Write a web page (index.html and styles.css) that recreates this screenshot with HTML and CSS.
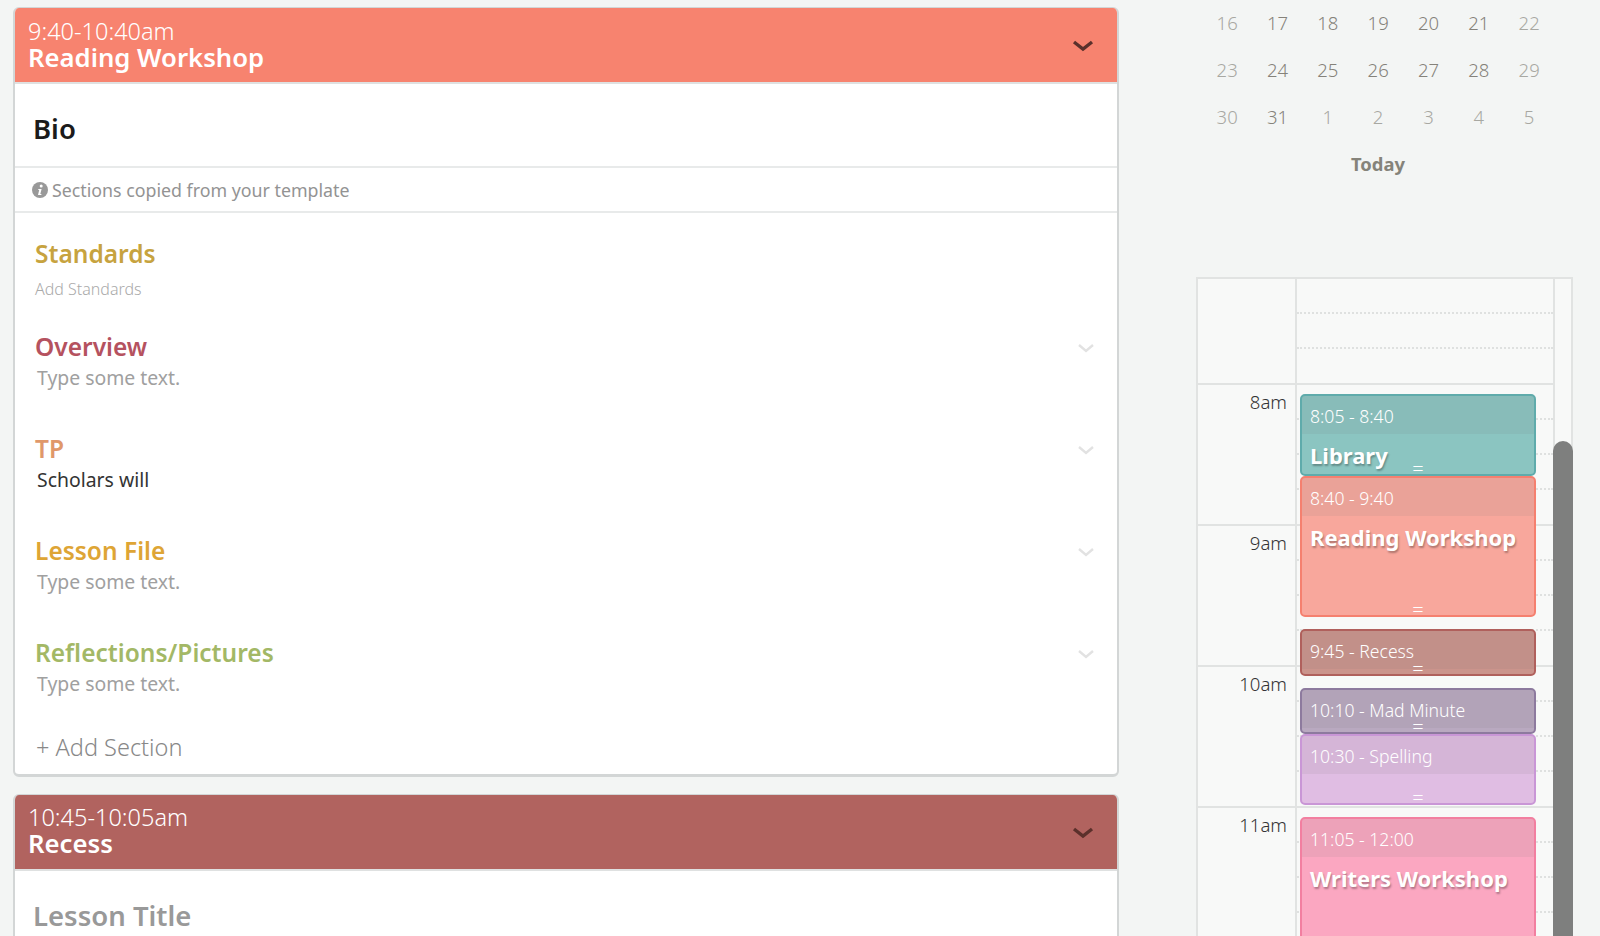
FILE: index.html
```html
<!DOCTYPE html>
<html lang="en">

<head>
    <meta charset="UTF-8">
    <title>Lesson Planner</title>
    <link rel="stylesheet" href="styles.css">
</head>

<body>
    <div class="page">
        <main class="lessons">
            <article class="card">
                <header class="card-head head-reading">
                    <div>
                        <div class="card-time">9:40-10:40am</div>
                        <div class="card-name">Reading Workshop</div>
                    </div>
                    <svg class="head-chevron" viewBox="0 0 22 14"><path d="M2 3l9 7 9-7"/></svg>
                </header>
                <div class="lesson-title">Bio</div>
                <div class="note">
                    <svg class="note-icon" viewBox="0 0 16 16"><circle cx="8" cy="8" r="8" fill="#999"/><circle cx="9.2" cy="4" r="1.5" fill="#fff"/><path d="M6.4 7h3.2l-1.3 5h1.1v1H6l1.2-5H6.2z" fill="#fff"/></svg>
                    <span>Sections copied from your template</span>
                </div>
                <section class="standards">
                    <h3 class="sec-name c-standards">Standards</h3>
                    <div class="add-standards">Add Standards</div>
                </section>
                <section class="sec">
                    <div>
                        <h3 class="sec-name c-overview">Overview</h3>
                        <div class="sec-text">Type some text.</div>
                    </div>
                    <svg class="sec-chevron" viewBox="0 0 18 12"><path d="M2 2l7 6 7-6"/></svg>
                </section>
                <section class="sec">
                    <div>
                        <h3 class="sec-name c-tp">TP</h3>
                        <div class="sec-text filled">Scholars will</div>
                    </div>
                    <svg class="sec-chevron" viewBox="0 0 18 12"><path d="M2 2l7 6 7-6"/></svg>
                </section>
                <section class="sec">
                    <div>
                        <h3 class="sec-name c-file">Lesson File</h3>
                        <div class="sec-text">Type some text.</div>
                    </div>
                    <svg class="sec-chevron" viewBox="0 0 18 12"><path d="M2 2l7 6 7-6"/></svg>
                </section>
                <section class="sec">
                    <div>
                        <h3 class="sec-name c-reflect">Reflections/Pictures</h3>
                        <div class="sec-text">Type some text.</div>
                    </div>
                    <svg class="sec-chevron" viewBox="0 0 18 12"><path d="M2 2l7 6 7-6"/></svg>
                </section>
                <div class="add-section">+ Add Section</div>
            </article>

            <article class="card">
                <header class="card-head head-recess">
                    <div>
                        <div class="card-time">10:45-10:05am</div>
                        <div class="card-name">Recess</div>
                    </div>
                    <svg class="head-chevron" viewBox="0 0 22 14"><path d="M2 3l9 7 9-7"/></svg>
                </header>
                <div class="lesson-title empty">Lesson Title</div>
            </article>
        </main>

        <aside class="side">
            <div class="month">
                <span class="off">16</span><span>17</span><span>18</span><span>19</span><span>20</span><span>21</span><span class="off">22</span>
                <span class="off">23</span><span>24</span><span>25</span><span>26</span><span>27</span><span>28</span><span class="off">29</span>
                <span class="off">30</span><span>31</span><span class="off">1</span><span class="off">2</span><span class="off">3</span><span class="off">4</span><span class="off">5</span>
            </div>
            <div class="today">Today</div>

            <div class="cal">
                <div class="cal-row first">
                    <div class="hour"></div>
                    <div class="day"><div class="slot"></div><div class="slot"></div><div class="slot last"></div></div>
                </div>
                <div class="cal-row">
                    <div class="hour">8am</div>
                    <div class="day"><div class="slot"></div><div class="slot"></div><div class="slot"></div><div class="slot last"></div></div>
                </div>
                <div class="cal-row">
                    <div class="hour">9am</div>
                    <div class="day"><div class="slot"></div><div class="slot"></div><div class="slot"></div><div class="slot last"></div></div>
                </div>
                <div class="cal-row">
                    <div class="hour">10am</div>
                    <div class="day"><div class="slot"></div><div class="slot"></div><div class="slot"></div><div class="slot last"></div></div>
                </div>
                <div class="cal-row">
                    <div class="hour">11am</div>
                    <div class="day"><div class="slot"></div><div class="slot"></div><div class="slot"></div><div class="slot last"></div></div>
                </div>

                <div class="events">
                    <div class="event ev-library">
                        <div class="ev-time">8:05 - 8:40</div>
                        <div class="ev-name">Library</div>
                        <span class="ev-handle">=</span>
                    </div>
                    <div class="event ev-reading">
                        <div class="ev-time">8:40 - 9:40</div>
                        <div class="ev-name">Reading Workshop</div>
                        <span class="ev-handle">=</span>
                    </div>
                    <div class="event ev-recess">
                        <div class="ev-time">9:45 - Recess</div>
                        <span class="ev-handle">=</span>
                    </div>
                    <div class="event ev-mad">
                        <div class="ev-time">10:10 - Mad Minute</div>
                        <span class="ev-handle">=</span>
                    </div>
                    <div class="event ev-spelling">
                        <div class="ev-time">10:30 - Spelling</div>
                        <span class="ev-handle">=</span>
                    </div>
                    <div class="event ev-writers">
                        <div class="ev-time">11:05 - 12:00</div>
                        <div class="ev-name">Writers Workshop</div>
                    </div>
                </div>

                <div class="scroll-thumb"></div>
            </div>
        </aside>
    </div>
</body>

</html>
```

FILE: styles.css
```css
html, body {
    margin: 0;
    height: 100%;
    overflow: hidden;
}

body {
    background-color: #f3f5f4;
    font-family: "Noto Sans", "Liberation Sans", sans-serif;
    color: #333;
}

.page {
    display: flex;
    height: 936px;
    overflow: hidden;
}

/* left column */
.lessons {
    width: 1106px;
    margin-left: 13px;
    padding-top: 7px;
    flex: none;
}

.card {
    background-color: #fff;
    border: 2px solid #d3d6d6;
    border-top-width: 1px;
    border-bottom-width: 3px;
    border-radius: 6px;
    margin-bottom: 17px;
    overflow: hidden;
}

.card-head {
    display: flex;
    justify-content: space-between;
    align-items: center;
    height: 74px;
    padding: 0 23px 0 13px;
    color: #fff;
    border-bottom: 2px solid #dfe1e1;
}

.head-reading {
    background-color: #f7836f;
}

.head-recess {
    background-color: #b1635f;
}

.card-time {
    font-size: 23.5px;
    font-weight: 300;
    line-height: 26px;
    margin-top: -1px;
}

.card-name {
    font-size: 25.7px;
    font-weight: 600;
    line-height: 28px;
}

.head-chevron {
    width: 22px;
    height: 14px;
    margin-top: 2px;
}

.head-chevron path {
    fill: none;
    stroke: #5b302b;
    stroke-width: 3.4;
}

.lesson-title {
    height: 82px;
    line-height: 90px;
    padding-left: 18px;
    font-size: 27.5px;
    font-weight: 600;
    color: #1b1b1b;
    border-bottom: 2px solid #e8eaea;
}

.lesson-title.empty {
    color: #999;
    border-bottom: 0;
}

.note {
    display: flex;
    align-items: center;
    gap: 4px;
    height: 43px;
    padding-left: 17px;
    font-size: 17.8px;
    color: #939393;
    border-bottom: 2px solid #e8eaea;
}

.note-icon {
    width: 16px;
    height: 16px;
}

.sec-name {
    margin: 0;
    font-size: 24.5px;
    font-weight: 600;
    line-height: 30px;
}

.c-standards { color: #c7a33f; }
.c-overview { color: #b5525f; }
.c-tp { color: #e0986a; }
.c-file { color: #dea535; }
.c-reflect { color: #a3b866; }

.standards {
    padding: 26px 20px 0;
    height: 92.5px;
}

.add-standards {
    margin-top: 9px;
    font-size: 16px;
    font-weight: 300;
    color: #aaa;
}

.sec {
    display: flex;
    justify-content: space-between;
    align-items: flex-start;
    height: 102.3px;
    padding: 0 22px 0 22px;
    box-sizing: border-box;
}

.sec .sec-name {
    margin-left: -2px;
}

.sec-text {
    font-size: 19.4px;
    line-height: 30px;
    margin-top: 1px;
    color: #a0a0a0;
}

.sec-text.filled {
    color: #333;
}

.sec-chevron {
    width: 18px;
    height: 12px;
    margin-top: 11px;
}

.sec-chevron path {
    fill: none;
    stroke: #e2e2e2;
    stroke-width: 2.4;
}

.add-section {
    margin-top: -11px;
    padding: 1px 0 11px 21px;
    font-size: 23.5px;
    font-weight: 300;
    color: #888;
}

/* right column */
.side {
    width: 377px;
    margin-left: 77px;
    flex: none;
}

.month {
    display: grid;
    grid-template-columns: repeat(7, 50.33px);
    grid-auto-rows: 47px;
    margin: -1px 0 0 6px;
    text-align: center;
    font-size: 18.5px;
    font-weight: 300;
    line-height: 47px;
    color: #85827a;
}

.month .off {
    color: #a8a8a2;
}

.today {
    width: 352px;
    margin: 0 0 90px 6px;
    text-align: center;
    font-size: 18.4px;
    font-weight: 700;
    line-height: 47px;
    color: #85837a;
}

.cal {
    position: relative;
    box-sizing: border-box;
    width: 377px;
    height: 700px;
    background-color: #f8f9f8;
    border: 2px solid #e1e3e2;
    border-bottom: 0;
    padding-right: 16px;
}

.cal-row {
    display: grid;
    grid-template-columns: 99px 1fr;
    border-bottom: 2px solid #e1e3e2;
    border-right: 2px solid #e1e3e2;
}

.hour {
    border-right: 2px solid #e1e3e2;
    padding: 4px 8px 0 0;
    text-align: right;
    font-size: 18.6px;
    font-weight: 300;
    line-height: 26px;
    color: #333;
}

.slot {
    height: 35px;
    border-bottom: 2px dotted #dfe1e0;
    box-sizing: border-box;
}

.slot.last {
    height: 34px;
    border-bottom: 0;
}

/* the coloured blocks sit on top of the hour lines */
.events {
    position: absolute;
    top: 115px;
    left: 102px;
    width: 236px;
}

.event {
    position: relative;
    box-sizing: border-box;
    background-color: #8bc5c1;
    border: 2px solid #5fabab;
    border-radius: 5px;
    color: #fff;
    overflow: hidden;
}

.ev-time {
    height: 38px;
    padding-left: 8px;
    font-size: 17.6px;
    font-weight: 300;
    line-height: 41px;
    background-color: rgba(120, 120, 120, 0.1);
}

.ev-name {
    padding-left: 8px;
    font-size: 22px;
    font-weight: 700;
    line-height: 43px;
    text-shadow: 1px 2px 2px rgba(0, 0, 0, 0.3);
}

.ev-handle {
    position: absolute;
    left: 0;
    right: 0;
    bottom: -3px;
    text-align: center;
    font-size: 20px;
    font-weight: 300;
    line-height: 16px;
}

.ev-library {
    height: 82px;
}

.ev-reading {
    height: 141px;
    background-color: #f8a79c;
    border-color: #f5806f;
}

.ev-recess {
    height: 47px;
    margin-top: 12px;
    background-color: #cb948c;
    border-color: #b0605c;
}

.ev-mad {
    height: 46px;
    margin-top: 12px;
    background-color: #b9a9c0;
    border-color: #8d7a9e;
}

.ev-spelling {
    height: 71px;
    background-color: #e0bde3;
    border-color: #c996d6;
}

.ev-writers {
    height: 200px;
    margin-top: 12px;
    background-color: #fba7c1;
    border-color: #f27fa0;
}

.scroll-thumb {
    position: absolute;
    top: 162px;
    right: -2px;
    bottom: 0;
    width: 20px;
    border-radius: 10px 10px 0 0;
    background-color: #7e7f7e;
}
```
